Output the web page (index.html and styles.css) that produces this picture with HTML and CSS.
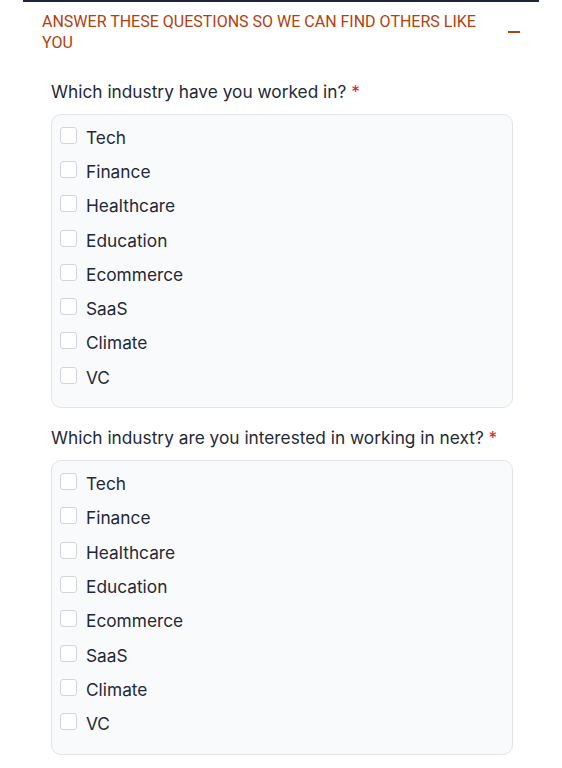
FILE: index.html
```html
<!DOCTYPE html>
<html lang="en">
<head>
  <meta charset="UTF-8" />
  <meta name="viewport" content="width=device-width, initial-scale=1.0"/>
  <title>Questions</title>
  <link rel="stylesheet" href="styles.css">
</head>
<body>
  <div class="panel">
    <div class="panel-head">
      <span class="panel-title">ANSWER THESE QUESTIONS SO WE CAN FIND OTHERS LIKE YOU</span>
      <span class="toggle"></span>
    </div>
    <div class="panel-body">
      <div class="question">
        <div class="label">Which industry have you worked in? <span class="req">*</span></div>
        <div class="options">
          <label class="option"><input type="checkbox"><span>Tech</span></label>
          <label class="option"><input type="checkbox"><span>Finance</span></label>
          <label class="option"><input type="checkbox"><span>Healthcare</span></label>
          <label class="option"><input type="checkbox"><span>Education</span></label>
          <label class="option"><input type="checkbox"><span>Ecommerce</span></label>
          <label class="option"><input type="checkbox"><span>SaaS</span></label>
          <label class="option"><input type="checkbox"><span>Climate</span></label>
          <label class="option"><input type="checkbox"><span>VC</span></label>
        </div>
      </div>
      <div class="question">
        <div class="label">Which industry are you interested in working in next? <span class="req">*</span></div>
        <div class="options">
          <label class="option"><input type="checkbox"><span>Tech</span></label>
          <label class="option"><input type="checkbox"><span>Finance</span></label>
          <label class="option"><input type="checkbox"><span>Healthcare</span></label>
          <label class="option"><input type="checkbox"><span>Education</span></label>
          <label class="option"><input type="checkbox"><span>Ecommerce</span></label>
          <label class="option"><input type="checkbox"><span>SaaS</span></label>
          <label class="option"><input type="checkbox"><span>Climate</span></label>
          <label class="option"><input type="checkbox"><span>VC</span></label>
        </div>
      </div>
    </div>
  </div>
</body>
</html>
```

FILE: styles.css
```css
* { box-sizing: border-box; }
html, body {
  margin: 0;
  background-color: #ffffff;
  font-family: Inter, 'Noto Sans', sans-serif;
  color: #1f2937;
}
.panel {
  margin-left: 23px;
  width: 516px;
  border-top: 2px solid #1e2538;
}
.panel-head {
  display: flex;
  align-items: center;
  justify-content: space-between;
  padding: 9px 19px 0 19px;
}
.panel-title {
  font-family: Roboto, 'Liberation Sans', sans-serif;
  font-size: 16px;
  line-height: 21px;
  color: #b3400f;
  width: 445px;
}
.toggle {
  width: 12px;
  height: 2px;
  background-color: #b3400f;
}
.panel-body {
  padding: 0 26px 0 28px;
}
.question { margin-top: 29px; }
.question + .question { margin-top: 20px; }
.label {
  font-size: 17.3px;
  line-height: 20px;
  margin-bottom: 12px;
}
.req { color: #e02424; }
.options {
  background-color: #f9fafb;
  border: 1px solid #e2e4e9;
  border-radius: 10px;
  padding: 5px 9px 13px 8px;
}
.option {
  display: flex;
  align-items: center;
  height: 34.3px;
  font-size: 17.3px;
}
.option input {
  appearance: none;
  margin: 0 9px 0 0;
  width: 17px;
  height: 17px;
  border: 1px solid #d1d5db;
  border-radius: 3px;
  background-color: #ffffff;
  position: relative;
  top: -2px;
}
```
